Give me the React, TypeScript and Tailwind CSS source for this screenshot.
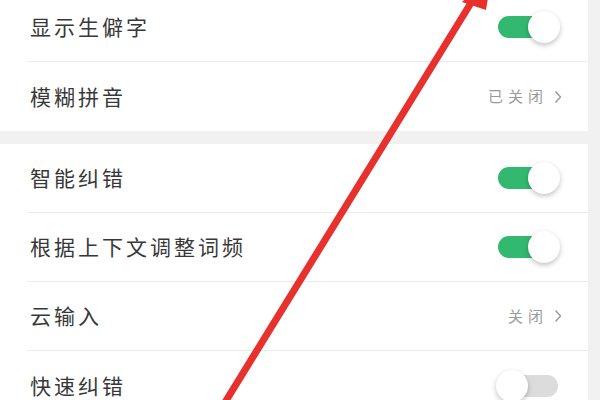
import React from 'react'

const font = { fontFamily: '"Noto Sans CJK SC", "Noto Sans", sans-serif' }

function Toggle({ on }: { on: boolean }) {
  return (
    <div className="relative h-[32px] w-[66px]">
      <div
        className={
          'absolute left-[2px] right-[4px] top-[5px] h-[22px] rounded-full ' +
          (on ? 'bg-[#33b96f]' : 'bg-[#dcdcdc]')
        }
      />
      <div
        className={
          'absolute top-0 h-[32px] w-[32px] rounded-full bg-white shadow-[0_2px_5px_rgba(0,0,0,0.25)] ' +
          (on ? 'right-[2px]' : 'left-0')
        }
      />
    </div>
  )
}

type Row = { label: string; toggle?: boolean; value?: string }

function Item({ row, last }: { row: Row; last: boolean }) {
  return (
    <div className="pl-[27px]">
      <div
        className={
          'flex h-[69px] items-center justify-between pr-[26px] ' +
          (last ? '' : 'border-b border-[#ececec]')
        }
      >
        <span className="pl-[3px] text-[21px] tracking-[3px] text-[#383838]" style={font}>
          {row.label}
        </span>
        {row.value !== undefined ? (
          <span className="flex items-center gap-[6px] text-[15px] tracking-[5px] text-[#9a9a9a]" style={font}>
            {row.value}
            <svg width="8" height="14" viewBox="0 0 8 14" fill="none">
              <path d="M1.5 1.5 6.5 7l-5 5.5" stroke="#9a9a9a" strokeWidth="1.4" />
            </svg>
          </span>
        ) : (
          <Toggle on={!!row.toggle} />
        )}
      </div>
    </div>
  )
}

const groups: Row[][] = [
  [
    { label: '显示生僻字', toggle: true },
    { label: '模糊拼音', value: '已关闭' },
  ],
  [
    { label: '智能纠错', toggle: true },
    { label: '根据上下文调整词频', toggle: true },
    { label: '云输入', value: '关闭' },
    { label: '快速纠错', toggle: false },
  ],
]

export default function App() {
  return (
    <div className="relative h-[400px] w-[600px] overflow-hidden bg-[#f1f1f1]">
      <div className="-mt-[7px] flex w-[588px] flex-col gap-[13px]">
        {groups.map((g, gi) => (
          <div key={gi} className="bg-white">
            {g.map((r, i) => (
              <Item key={r.label} row={r} last={i === g.length - 1} />
            ))}
          </div>
        ))}
      </div>

      {/* red annotation arrow */}
      <svg className="pointer-events-none absolute inset-0" width="600" height="400" viewBox="0 0 600 400">
        <line x1="224" y1="404" x2="474" y2="-2" stroke="#e8302c" strokeWidth="7" strokeLinecap="round" />
        <polygon points="492,-26 462,2 486,10" fill="#e8302c" />
      </svg>
    </div>
  )
}
